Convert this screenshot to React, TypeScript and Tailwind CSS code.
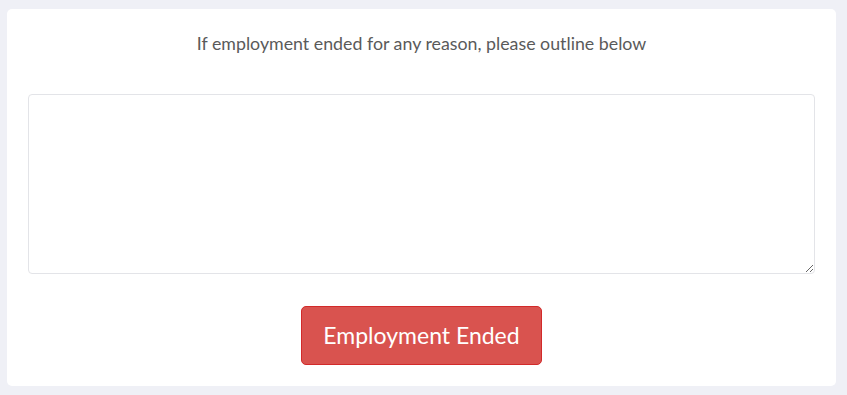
import React from "react";

export default function App() {
  return (
    <div
      className="min-h-[395px] w-full bg-[#eff0f6] pt-[9px] pl-[7px] pr-[11px] pb-[9px]"
      style={{ fontFamily: "Lato, 'Open Sans', sans-serif" }}
    >
      <div className="flex flex-col items-center rounded-[5px] bg-white px-[20px] pt-[23px] pb-[21px]">
        <p className="text-[17.8px] leading-[22px] text-[#5a5a5a]">
          If employment ended for any reason, please outline below
        </p>
        <textarea className="mt-[40px] h-[180px] w-[787px] resize-y rounded-[4px] border border-[#e3e4e8] bg-white outline-none" />
        <button className="mt-[32px] h-[59px] w-[241px] rounded-[5px] border border-[#d22a2a] bg-[#d9534f] text-[23px] text-white">
          Employment Ended
        </button>
      </div>
    </div>
  );
}
